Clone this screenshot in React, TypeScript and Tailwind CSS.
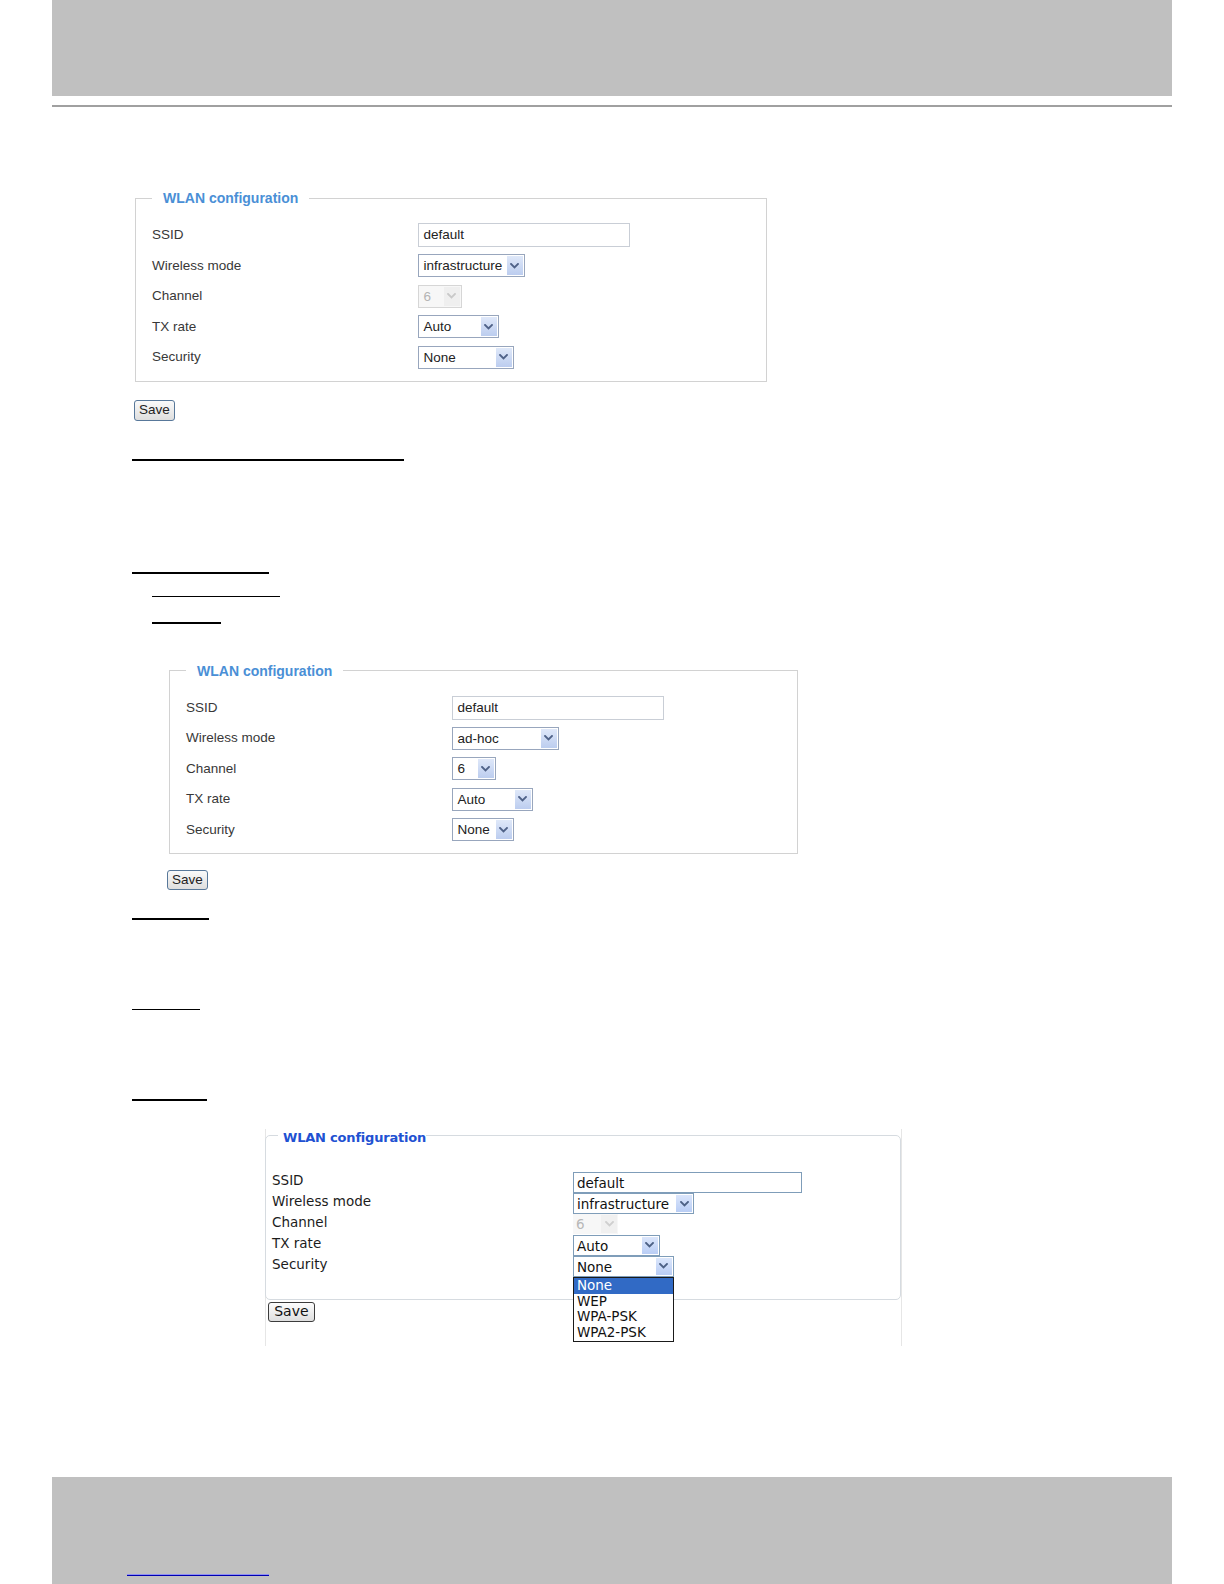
import React from "react";

const A = "font-['Liberation_Sans',Arial,sans-serif]";
const X = "font-['DejaVu_Sans',Verdana,sans-serif]";

function Chevron({ color }: { color: string }) {
  return (
    <svg width="9" height="6" viewBox="0 0 9 6" aria-hidden="true">
      <path d="M1 1 L4.5 4.5 L8 1" stroke={color} strokeWidth="1.9" fill="none" strokeLinecap="square" />
    </svg>
  );
}

function SelA({ cls, value, disabled }: { cls: string; value: string; disabled?: boolean }) {
  if (disabled) {
    return (
      <div className={`${cls} h-[23px] flex items-stretch border border-[#d6d6d6] bg-[#f7f7f7]`}>
        <span className="flex-1 pl-[5px] text-[13.5px] leading-[21px] text-[#b4b4b4]">{value}</span>
        <span className="w-[16px] my-[1px] mr-[1px] bg-[#efefef] flex items-center justify-center">
          <Chevron color="#c9c9c9" />
        </span>
      </div>
    );
  }
  return (
    <div className={`${cls} h-[23px] flex items-stretch border border-[#98a6bd] bg-white`}>
      <span className="flex-1 pl-[5px] text-[13.5px] leading-[21px] text-[#222] whitespace-nowrap">{value}</span>
      <span className="w-[16px] my-[1px] mr-[1px] bg-linear-to-b from-[#dfe8f9] to-[#bccdef] flex items-center justify-center">
        <Chevron color="#4f6288" />
      </span>
    </div>
  );
}

function RowA({ label, children }: { label: string; children: React.ReactNode }) {
  return (
    <div className="flex items-center h-[30.5px]">
      <div className="w-[265.5px] text-[13.5px] text-[#383838]">{label}</div>
      {children}
    </div>
  );
}

function FieldsetA({ cls, adhoc }: { cls: string; adhoc?: boolean }) {
  return (
    <fieldset className={`${cls} border border-[#d2d2d2] pl-[16px] pt-[14px] ${A}`}>
      <legend className="px-[11px] text-[14px] leading-[16px] font-bold text-[#4a8fd6]">WLAN configuration</legend>
      <RowA label="SSID">
        <div className="w-[212px] h-[24px] border border-[#c9ced6] bg-white pl-[5px] text-[13.5px] leading-[22px] text-[#222]">
          default
        </div>
      </RowA>
      <RowA label="Wireless mode">
        <SelA cls="w-[107px]" value={adhoc ? "ad-hoc" : "infrastructure"} />
      </RowA>
      <RowA label="Channel">
        <SelA cls="w-[44px]" value="6" disabled={!adhoc} />
      </RowA>
      <RowA label="TX rate">
        <SelA cls="w-[81px]" value="Auto" />
      </RowA>
      <RowA label="Security">
        <SelA cls={adhoc ? "w-[62px]" : "w-[96px]"} value="None" />
      </RowA>
    </fieldset>
  );
}

function SaveA({ cls }: { cls: string }) {
  return (
    <button
      className={`${cls} w-[41px] flex items-center justify-center border border-[#58789a] rounded-[3px] bg-linear-to-b from-[#fafafa] to-[#dedede] text-[13.5px] text-[#222] ${A}`}
    >
      Save
    </button>
  );
}

function SelX({ cls, value, disabled }: { cls: string; value: string; disabled?: boolean }) {
  if (disabled) {
    return (
      <div className={`${cls} h-[20px] flex items-stretch bg-[#f7f7f7]`}>
        <span className="flex-1 pl-[3px] text-[13.5px] leading-[20px] text-[#b8b8b8]">{value}</span>
        <span className="w-[16px] my-[1px] mr-[1px] bg-[#f0f0f0] flex items-center justify-center">
          <Chevron color="#cfcfcf" />
        </span>
      </div>
    );
  }
  return (
    <div className={`${cls} h-[21px] flex items-stretch border border-[#7f9db9] bg-white`}>
      <span className="flex-1 pl-[3px] text-[13.5px] leading-[20px] text-[#111] whitespace-nowrap">{value}</span>
      <span className="w-[16px] my-[1px] mr-[1px] bg-linear-to-b from-[#dbe6fb] to-[#b9cdf5] flex items-center justify-center">
        <Chevron color="#4d6185" />
      </span>
    </div>
  );
}

function RowX({ label, children }: { label: string; children: React.ReactNode }) {
  return (
    <div className="flex items-start h-[20.9px]">
      <div className="w-[300.9px] text-[13.5px] leading-[16px] text-[#1c1c1c]">{label}</div>
      {children}
    </div>
  );
}

export default function App() {
  return (
    <div className="w-[1224px] h-[1584px] bg-white flex flex-col items-start overflow-hidden">
      {/* header band */}
      <div className="ml-[52px] w-[1120px] h-[96px] shrink-0 bg-[#c0c0c0]" />
      <div className="ml-[52px] mt-[9px] w-[1120px] h-[2px] shrink-0 bg-[#a0a0a0]" />

      {/* first screenshot */}
      <FieldsetA cls="ml-[135px] mt-[83px] w-[632px] shrink-0 pb-[8px]" />
      <SaveA cls="ml-[134px] mt-[18px] h-[21px] shrink-0" />

      <div className="ml-[132px] mt-[38.5px] w-[272px] h-[2px] shrink-0 bg-black" />
      <div className="ml-[132px] mt-[111px] w-[137px] h-[2px] shrink-0 bg-black" />
      <div className="ml-[152px] mt-[22px] w-[128px] h-[1px] shrink-0 bg-black" />
      <div className="ml-[152px] mt-[25px] w-[69px] h-[2px] shrink-0 bg-black" />

      {/* second screenshot */}
      <FieldsetA cls="ml-[169px] mt-[38.7px] w-[629px] shrink-0 pb-[7.5px]" adhoc />
      <SaveA cls="ml-[167px] mt-[16.8px] h-[20px] shrink-0" />

      <div className="ml-[132px] mt-[27.5px] w-[77px] h-[2px] shrink-0 bg-black" />
      <div className="ml-[132px] mt-[89px] w-[68px] h-[1px] shrink-0 bg-black" />
      <div className="ml-[132px] mt-[89px] w-[75px] h-[2px] shrink-0 bg-black" />

      {/* third screenshot */}
      <div className={`ml-[265px] mt-[28px] w-[637px] h-[217px] shrink-0 border-l border-r border-[#e6e6e6] ${X}`}>
        <fieldset className="-ml-px w-[636px] border border-[#d6dbe0] rounded-[5px] pl-[6px] pt-[29.3px] pb-[22.2px]">
          <legend className="ml-[6px] pl-[5px] pr-0 text-[13px] leading-[14px] font-bold tracking-[-0.2px] text-[#2151d2]">
            <span className="relative top-[2.5px]">WLAN configuration</span>
          </legend>
          <RowX label="SSID">
            <div className="w-[229.4px] h-[21px] border border-[#7f9db9] bg-white pl-[3px] text-[13.5px] leading-[20px] text-[#111]">
              default
            </div>
          </RowX>
          <RowX label="Wireless mode">
            <SelX cls="w-[121.6px]" value="infrastructure" />
          </RowX>
          <RowX label="Channel">
            <SelX cls="w-[45.4px]" value="6" disabled />
          </RowX>
          <RowX label="TX rate">
            <SelX cls="w-[86.7px]" value="Auto" />
          </RowX>
          <RowX label="Security">
            <div className="relative">
              <SelX cls="w-[101px]" value="None" />
              <div className="absolute left-0 top-full w-[101px] border border-[#1a1a1a] bg-white z-10">
                <div className="h-[15.8px] pl-[3px] text-[13.5px] leading-[15.5px] bg-[#316ac5] text-white">None</div>
                <div className="h-[15.8px] pl-[3px] text-[13.5px] leading-[15.5px] text-[#111]">WEP</div>
                <div className="h-[15.8px] pl-[3px] text-[13.5px] leading-[15.5px] text-[#111]">WPA-PSK</div>
                <div className="h-[15.8px] pl-[3px] text-[13.5px] leading-[15.5px] text-[#111]">WPA2-PSK</div>
              </div>
            </div>
          </RowX>
        </fieldset>
        <button className="ml-[1.6px] mt-[1.7px] w-[47.6px] h-[20.6px] flex items-center justify-center border border-[#3c3c3c] rounded-[3px] bg-linear-to-b from-[#fdfdfd] to-[#dedede] text-[14px] text-[#111]">
          Save
        </button>
      </div>

      {/* footer band */}
      <div className="ml-[52px] mt-[131px] w-[1120px] h-[107px] shrink-0 bg-[#c0c0c0] pt-[97px] pl-[75px]">
        <div className="w-[142px] h-[1px] bg-[#8f8ff2]" />
        <div className="w-[142px] h-[1px] bg-[#0000b0]" />
      </div>
    </div>
  );
}
